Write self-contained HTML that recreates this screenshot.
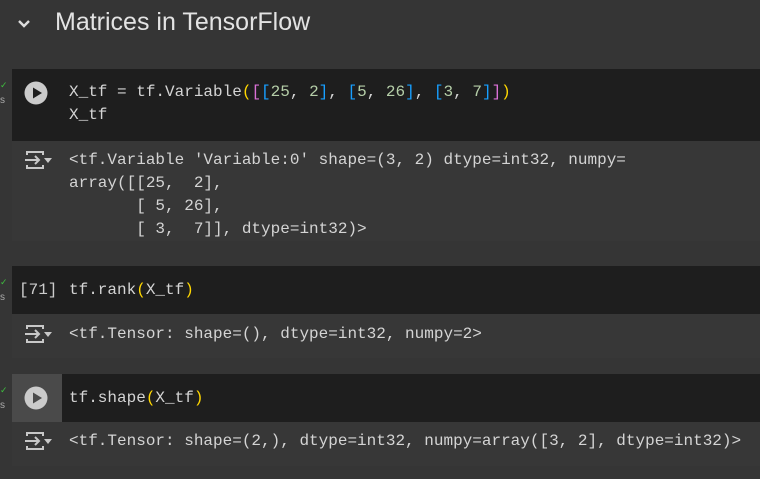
<!DOCTYPE html>
<html><head><style>
body{margin:0;width:760px;height:479px;background:#353535;position:relative;overflow:hidden;font-family:"Liberation Mono",monospace;font-size:16px;color:#d4d4d4}
.a{position:absolute}
.code{background:#1e1e1e;left:12px;width:748px}
.out{background:#373737;left:12px;width:748px}
.t{position:absolute;white-space:pre;line-height:23px}
.y{color:#ffd700}.p{color:#da70d6}.b{color:#179fff}.n{color:#b5cea8}
.chk{position:absolute;left:0;color:#3fbf3f;font-size:9px;font-family:"Liberation Sans",sans-serif}
.s{position:absolute;left:0;color:#aaa;font-size:10px;font-family:"Liberation Sans",sans-serif}
</style></head><body>
<svg class="a" style="left:16px;top:17px" width="16" height="14" viewBox="0 0 16 14"><path d="M3 4l5 5 5-5" stroke="#ddd" stroke-width="2.4" fill="none"/></svg>
<div class="a" style="left:55px;top:8px;font-family:'Liberation Sans',sans-serif;font-size:25px;color:#e3e3e3">Matrices in TensorFlow</div>

<div class="a code" style="top:69px;height:72px"></div>
<div class="chk" style="top:80px">✓</div><div class="s" style="top:95px">s</div>
<svg class="a" style="left:24px;top:81px" width="24" height="24"><circle cx="12" cy="12" r="11.5" fill="#cbcbcb"/><path d="M9 6.5v11l9-5.5z" fill="#1e1e1e"/></svg>
<div class="t" style="left:69px;top:81px">X_tf = tf.Variable<span class="y">(</span><span class="p">[</span><span class="b">[</span><span class="n">25</span>, <span class="n">2</span><span class="b">]</span>, <span class="b">[</span><span class="n">5</span>, <span class="n">26</span><span class="b">]</span>, <span class="b">[</span><span class="n">3</span>, <span class="n">7</span><span class="b">]</span><span class="p">]</span><span class="y">)</span>
X_tf</div>
<div class="a out" style="top:141px;height:100px"></div>
<svg class="a" style="left:23px;top:150px" width="30" height="22"><g stroke="#c8c8c8" stroke-width="2" fill="none"><path d="M4 5V2h16v3M4 15v3h16v-3"/><path d="M2 10h14M12 6l4 4-4 4"/></g><path d="M21 8h8l-4 5z" fill="#c8c8c8"/></svg>
<div class="t" style="left:69px;top:149px">&lt;tf.Variable 'Variable:0' shape=(3, 2) dtype=int32, numpy=
array([[25,  2],
       [ 5, 26],
       [ 3,  7]], dtype=int32)&gt;</div>

<div class="a code" style="top:266px;height:48px"></div>
<div class="chk" style="top:277px">✓</div><div class="s" style="top:292px">s</div>
<div class="t" style="left:19px;top:279px;color:#ccc">[71]</div>
<div class="t" style="left:69px;top:279px">tf.rank<span class="y">(</span>X_tf<span class="y">)</span></div>
<div class="a out" style="top:314px;height:44px"></div>
<svg class="a" style="left:23px;top:324px" width="30" height="22"><g stroke="#c8c8c8" stroke-width="2" fill="none"><path d="M4 5V2h16v3M4 15v3h16v-3"/><path d="M2 10h14M12 6l4 4-4 4"/></g><path d="M21 8h8l-4 5z" fill="#c8c8c8"/></svg>
<div class="t" style="left:69px;top:323px">&lt;tf.Tensor: shape=(), dtype=int32, numpy=2&gt;</div>

<div class="a code" style="top:374px;height:48px"></div>
<div class="a" style="left:12px;top:374px;width:50px;height:48px;background:#4a4a4a"></div>
<div class="chk" style="top:385px">✓</div><div class="s" style="top:400px">s</div>
<svg class="a" style="left:24px;top:386px" width="24" height="24"><circle cx="12" cy="12" r="11.5" fill="#cbcbcb"/><path d="M9 6.5v11l9-5.5z" fill="#4a4a4a"/></svg>
<div class="t" style="left:69px;top:387px">tf.shape<span class="y">(</span>X_tf<span class="y">)</span></div>
<div class="a out" style="top:422px;height:44px"></div>
<svg class="a" style="left:23px;top:431px" width="30" height="22"><g stroke="#c8c8c8" stroke-width="2" fill="none"><path d="M4 5V2h16v3M4 15v3h16v-3"/><path d="M2 10h14M12 6l4 4-4 4"/></g><path d="M21 8h8l-4 5z" fill="#c8c8c8"/></svg>
<div class="t" style="left:69px;top:430px">&lt;tf.Tensor: shape=(2,), dtype=int32, numpy=array([3, 2], dtype=int32)&gt;</div>
</body></html>
